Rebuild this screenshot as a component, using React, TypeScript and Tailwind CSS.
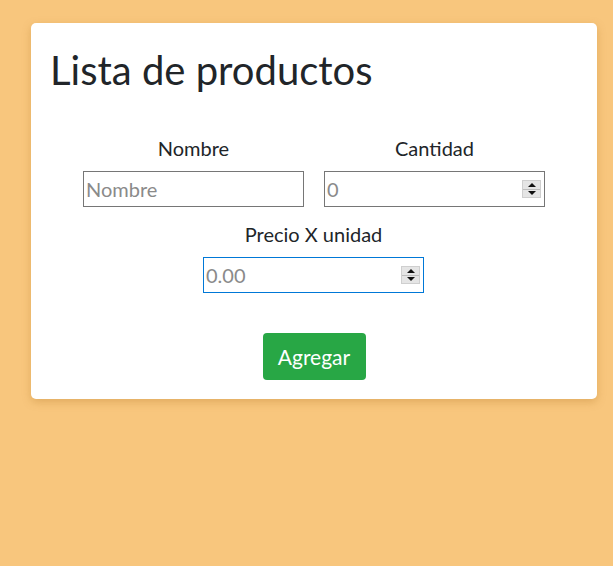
import React from "react";

function Spinner() {
  return (
    <div className="absolute right-[3px] top-1/2 -translate-y-1/2 flex flex-col w-[19px] h-[18px] bg-[#e5e5e5] border border-[#cfcfcf]">
      <div className="flex-1 flex items-center justify-center border-b border-[#bdbdbd]">
        <svg width="8" height="4" viewBox="0 0 8 4"><path d="M4 0 L8 4 L0 4 Z" fill="#111" /></svg>
      </div>
      <div className="flex-1 flex items-center justify-center">
        <svg width="8" height="4" viewBox="0 0 8 4"><path d="M0 0 L8 0 L4 4 Z" fill="#111" /></svg>
      </div>
    </div>
  );
}

function Field({ label, placeholder, number, focused }: { label: string; placeholder: string; number?: boolean; focused?: boolean }) {
  return (
    <div className="flex flex-col items-center">
      <div className="text-[20px] leading-[28px] text-[#212529]">{label}</div>
      <div
        className={
          "relative mt-[9px] w-[221px] h-[36px] bg-white border flex items-center " +
          (focused ? "border-[#0078d7]" : "border-[#767676]")
        }
      >
        <span className="pl-[2px] text-[20px] text-[#8a8a8a] leading-none">{placeholder}</span>
        {number && <Spinner />}
      </div>
    </div>
  );
}

export default function App() {
  return (
    <div className="min-h-screen bg-[#f8c67d] pt-[23px] pl-[31px] pr-[16px]" style={{ fontFamily: "Lato, 'Open Sans', sans-serif" }}>
      <div className="bg-white rounded-[5px] shadow-[0_3px_8px_rgba(180,120,40,0.35)] px-[19px] pt-[23px] pb-[19px]">
        <h1 className="text-[40px] leading-[1.2] text-[#212529] font-normal">Lista de productos</h1>
        <div className="mt-[40px] mx-auto w-[482px] grid grid-cols-2 gap-y-[13px]">
          <Field label="Nombre" placeholder="Nombre" />
          <Field label="Cantidad" placeholder="0" number />
          <div className="col-span-2 pr-[1px]">
            <Field label="Precio X unidad" placeholder="0.00" number focused />
          </div>
        </div>
        <div className="mt-[40px] flex justify-center">
          <button className="bg-[#28a745] text-white text-[21px] rounded-[4px] w-[103px] h-[47px]">Agregar</button>
        </div>
      </div>
    </div>
  );
}
